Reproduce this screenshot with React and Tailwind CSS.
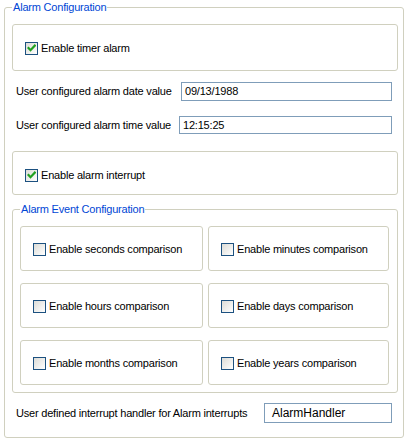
import React from "react";

function Check({ checked }) {
  return (
    <span className="w-[13px] h-[13px] border border-[#1c5180] bg-linear-to-br from-[#dcdcd7] to-white flex items-center justify-center shrink-0">
      {checked && (
        <svg width="9" height="9" viewBox="0 0 9 9">
          <path d="M1.5 4 L3.5 6.2 L7.8 1.6" fill="none" stroke="#21a121" strokeWidth="2.2" strokeLinecap="square" />
        </svg>
      )}
    </span>
  );
}

function CheckLabel({ checked, children }) {
  return (
    <div className="flex items-center gap-[3px]">
      <Check checked={checked} />
      <span className="leading-[13px]">{children}</span>
    </div>
  );
}

function Box({ className = "", children }) {
  return (
    <div className={"border border-[#d0d0bf] rounded-[3px] " + className}>{children}</div>
  );
}

function Field({ value, className = "" }) {
  return (
    <div className={"border border-[#7f9db9] bg-white flex items-center " + className}>
      {value}
    </div>
  );
}

export default function App() {
  const events = [
    "Enable seconds comparison",
    "Enable minutes comparison",
    "Enable hours comparison",
    "Enable days comparison",
    "Enable months comparison",
    "Enable years comparison",
  ];
  return (
    <div
      className="w-[408px] h-[442px] bg-white pt-[7px] pl-[4px] text-[11px] tracking-[-0.2px] text-black"
      style={{ fontFamily: 'Tahoma, "Liberation Sans", Arial, sans-serif' }}
    >
      <div className="relative w-[400px] h-[431px] border border-[#d0d0bf] rounded-[3px] pl-[7px] pt-[16px]">
        <span className="absolute left-[7px] top-[-7px] bg-white px-px text-[#0046d5] leading-[13px]">
          Alarm Configuration
        </span>

        <Box className="w-[386px] h-[47px] pl-[12px] pt-[17px]">
          <CheckLabel checked>Enable timer alarm</CheckLabel>
        </Box>

        <div className="mt-[11px] ml-[4px] w-[376px] h-[19px] flex items-center justify-between">
          <span>User configured alarm date value</span>
          <Field value="09/13/1988" className="w-[211px] h-[19px] pl-[3px]" />
        </div>
        <div className="mt-[15px] ml-[4px] w-[376px] h-[18px] flex items-center justify-between">
          <span>User configured alarm time value</span>
          <Field value="12:15:25" className="w-[213px] h-[18px] pl-[3px]" />
        </div>

        <Box className="mt-[17px] w-[386px] h-[44px] pl-[12px] pt-[17px]">
          <CheckLabel checked>Enable alarm interrupt</CheckLabel>
        </Box>

        <div className="relative mt-[14px] w-[386px] border border-[#d0d0bf] rounded-[3px] pl-[7px] pt-[16px] pb-[7px]">
          <span className="absolute left-[7px] top-[-7px] bg-white px-px text-[#0046d5] leading-[13px]">
            Alarm Event Configuration
          </span>
          <div className="grid grid-cols-[183px_181px] gap-x-[5px] gap-y-[12px]">
            {events.map((e) => (
              <Box key={e} className="h-[45px] pl-[12px] pt-[16px]">
                <CheckLabel>{e}</CheckLabel>
              </Box>
            ))}
          </div>
        </div>

        <div className="mt-[10px] ml-[4px] w-[376px] h-[20px] flex items-center justify-between">
          <span>User defined interrupt handler for Alarm interrupts</span>
          <Field value="AlarmHandler" className="w-[128px] h-[20px] pl-[7px] text-[12px] tracking-[0px]" />
        </div>
      </div>
    </div>
  );
}
